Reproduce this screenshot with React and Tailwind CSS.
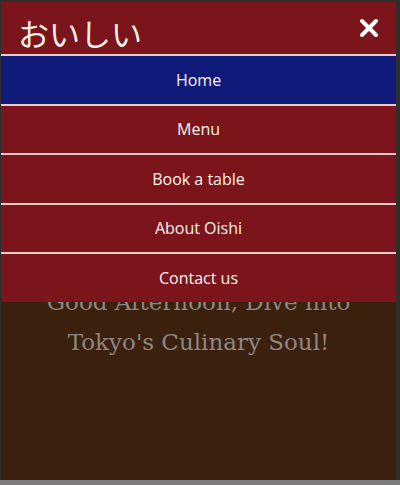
import React from 'react';

const links = ['Home', 'Menu', 'Book a table', 'About Oishi', 'Contact us'];

export default function App() {
  return (
    <div className="flex flex-col w-[400px] h-[485px] bg-[#2e2e2e] pt-[2px]">
      <div className="flex flex-1 pl-[1px] pr-[4px]">
        <div className="relative flex-1 bg-[#3b200d]">
          {/* hero heading behind the open menu */}
          <div className="pt-[280px] text-center text-[23px] leading-[40px] text-[#8c8784]" style={{ fontFamily: '"DejaVu Serif", serif' }}>
            <p>Good Afternoon, Dive into</p>
            <p>Tokyo's Culinary Soul!</p>
          </div>

          <div className="absolute inset-x-0 top-0">
            <header className="flex items-center justify-between h-[52px] bg-[#7b151b] pl-[17px] pr-[17px]">
              <span className="mt-[8px] text-[31px] text-[#f7efe9] leading-none" style={{ fontFamily: '"Noto Sans CJK JP", sans-serif' }}>
                おいしい
              </span>
              <svg width="20" height="20" viewBox="0 0 20 20">
                <path d="M3 3 L17 17 M17 3 L3 17" stroke="#fff" strokeWidth="4" strokeLinecap="round" />
              </svg>
            </header>
            <nav className="flex flex-col">
              {links.map((l, i) => (
                <a
                  key={l}
                  className={`flex items-center justify-center h-[49.5px] border-t-[2px] border-[#e9c9c9] text-[16px] font-medium text-[#fbf3f0] ${i === 0 ? 'bg-[#101b79]' : 'bg-[#7b151b]'}`}
                  style={{ fontFamily: '"Open Sans", sans-serif' }}
                >
                  {l}
                </a>
              ))}
            </nav>
          </div>
        </div>
      </div>
      <div className="h-[5px] bg-[#7d7d7d]" />
    </div>
  );
}
